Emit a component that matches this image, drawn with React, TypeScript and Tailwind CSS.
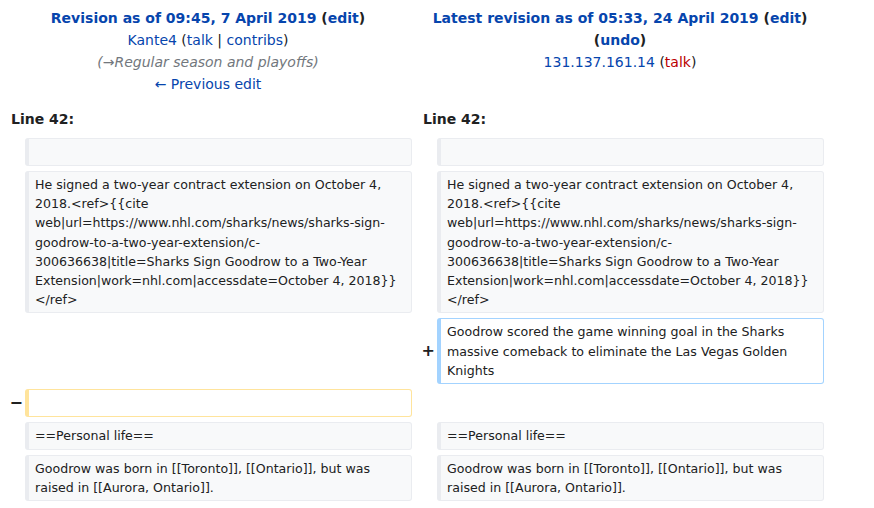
import React from 'react'

const font = "font-['DejaVu_Sans',sans-serif]"

type Cell = { kind: 'context' | 'added' | 'deleted' | 'empty'; text?: string }

const Box = ({ cell }: { cell: Cell }) => {
  if (cell.kind === 'empty') return <div />
  const tone =
    cell.kind === 'added'
      ? 'bg-white border-[#a3d3ff]'
      : cell.kind === 'deleted'
        ? 'bg-white border-[#ffe49c]'
        : 'bg-[#f8f9fa] border-[#eaecf0]'
  return (
    <div
      className={`min-h-[28px] border border-l-4 rounded-[3px] px-[6px] py-[3px] text-[12.6px] leading-[19.2px] text-[#202122] whitespace-pre-wrap break-words ${tone}`}
    >
      {cell.text || '\u00a0'}
    </div>
  )
}

const Marker = ({ sign }: { sign?: string }) => (
  <div className="flex items-center justify-end pr-[2px] text-[16px] font-bold text-[#202122]">
    {sign}
  </div>
)

const signed =
  'He signed a two-year contract extension on October 4, 2018.<ref>{{cite web|url=https://www.nhl.com/sharks/news/sharks-sign-goodrow-to-a-two-year-extension/c-300636638|title=Sharks Sign Goodrow to a Two-Year Extension|work=nhl.com|accessdate=October 4, 2018}}</ref>'
const born = 'Goodrow was born in [[Toronto]], [[Ontario]], but was raised in [[Aurora, Ontario]].'

const rows: { left: Cell; right: Cell; lm?: string; rm?: string }[] = [
  { left: { kind: 'context' }, right: { kind: 'context' } },
  { left: { kind: 'context', text: signed }, right: { kind: 'context', text: signed } },
  {
    left: { kind: 'empty' },
    right: {
      kind: 'added',
      text: 'Goodrow scored the game winning goal in the Sharks massive comeback to eliminate the Las Vegas Golden Knights',
    },
    rm: '+',
  },
  { left: { kind: 'deleted' }, right: { kind: 'empty' }, lm: '−' },
  { left: { kind: 'context', text: '==Personal life==' }, right: { kind: 'context', text: '==Personal life==' } },
  { left: { kind: 'context', text: born }, right: { kind: 'context', text: born } },
]

export default function App() {
  return (
    <div className={`w-[874px] h-[508px] bg-white overflow-hidden ${font} text-[#202122]`}>
      <div className="w-[824px] grid grid-cols-2 pt-[7px] text-[14px] leading-[22px] text-center">
        <div className="pl-[4px]">
          <div className="font-bold">
            <span className="text-[#0645ad]">Revision as of 09:45, 7 April 2019</span> (
            <span className="text-[#0645ad]">edit</span>)
          </div>
          <div>
            <span className="text-[#0645ad]">Kante4</span> (<span className="text-[#0645ad]">talk</span> |{' '}
            <span className="text-[#0645ad]">contribs</span>)
          </div>
          <div className="italic text-[#72777d]">(→Regular season and playoffs)</div>
          <div className="text-[#0645ad]">← Previous edit</div>
        </div>
        <div className="pl-[4px]">
          <div className="font-bold">
            <span className="text-[#0645ad]">Latest revision as of 05:33, 24 April 2019</span> (
            <span className="text-[#0645ad]">edit</span>)
          </div>
          <div className="font-bold">
            (<span className="text-[#0645ad]">undo</span>)
          </div>
          <div>
            <span className="text-[#0645ad]">131.137.161.14</span> (<span className="text-[#ba0000]">talk</span>)
          </div>
        </div>
      </div>

      <div className="w-[824px] grid grid-cols-2 mt-[13px] text-[14px] leading-[22px] font-bold">
        <div className="pl-[11px]">Line 42:</div>
        <div className="pl-[11px]">Line 42:</div>
      </div>

      <div className="grid grid-cols-[25px_387px_25px_387px] gap-y-[5px] mt-[8px]">
        {rows.map((r, i) => (
          <React.Fragment key={i}>
            <Marker sign={r.lm} />
            <Box cell={r.left} />
            <Marker sign={r.rm} />
            <Box cell={r.right} />
          </React.Fragment>
        ))}
      </div>
    </div>
  )
}
